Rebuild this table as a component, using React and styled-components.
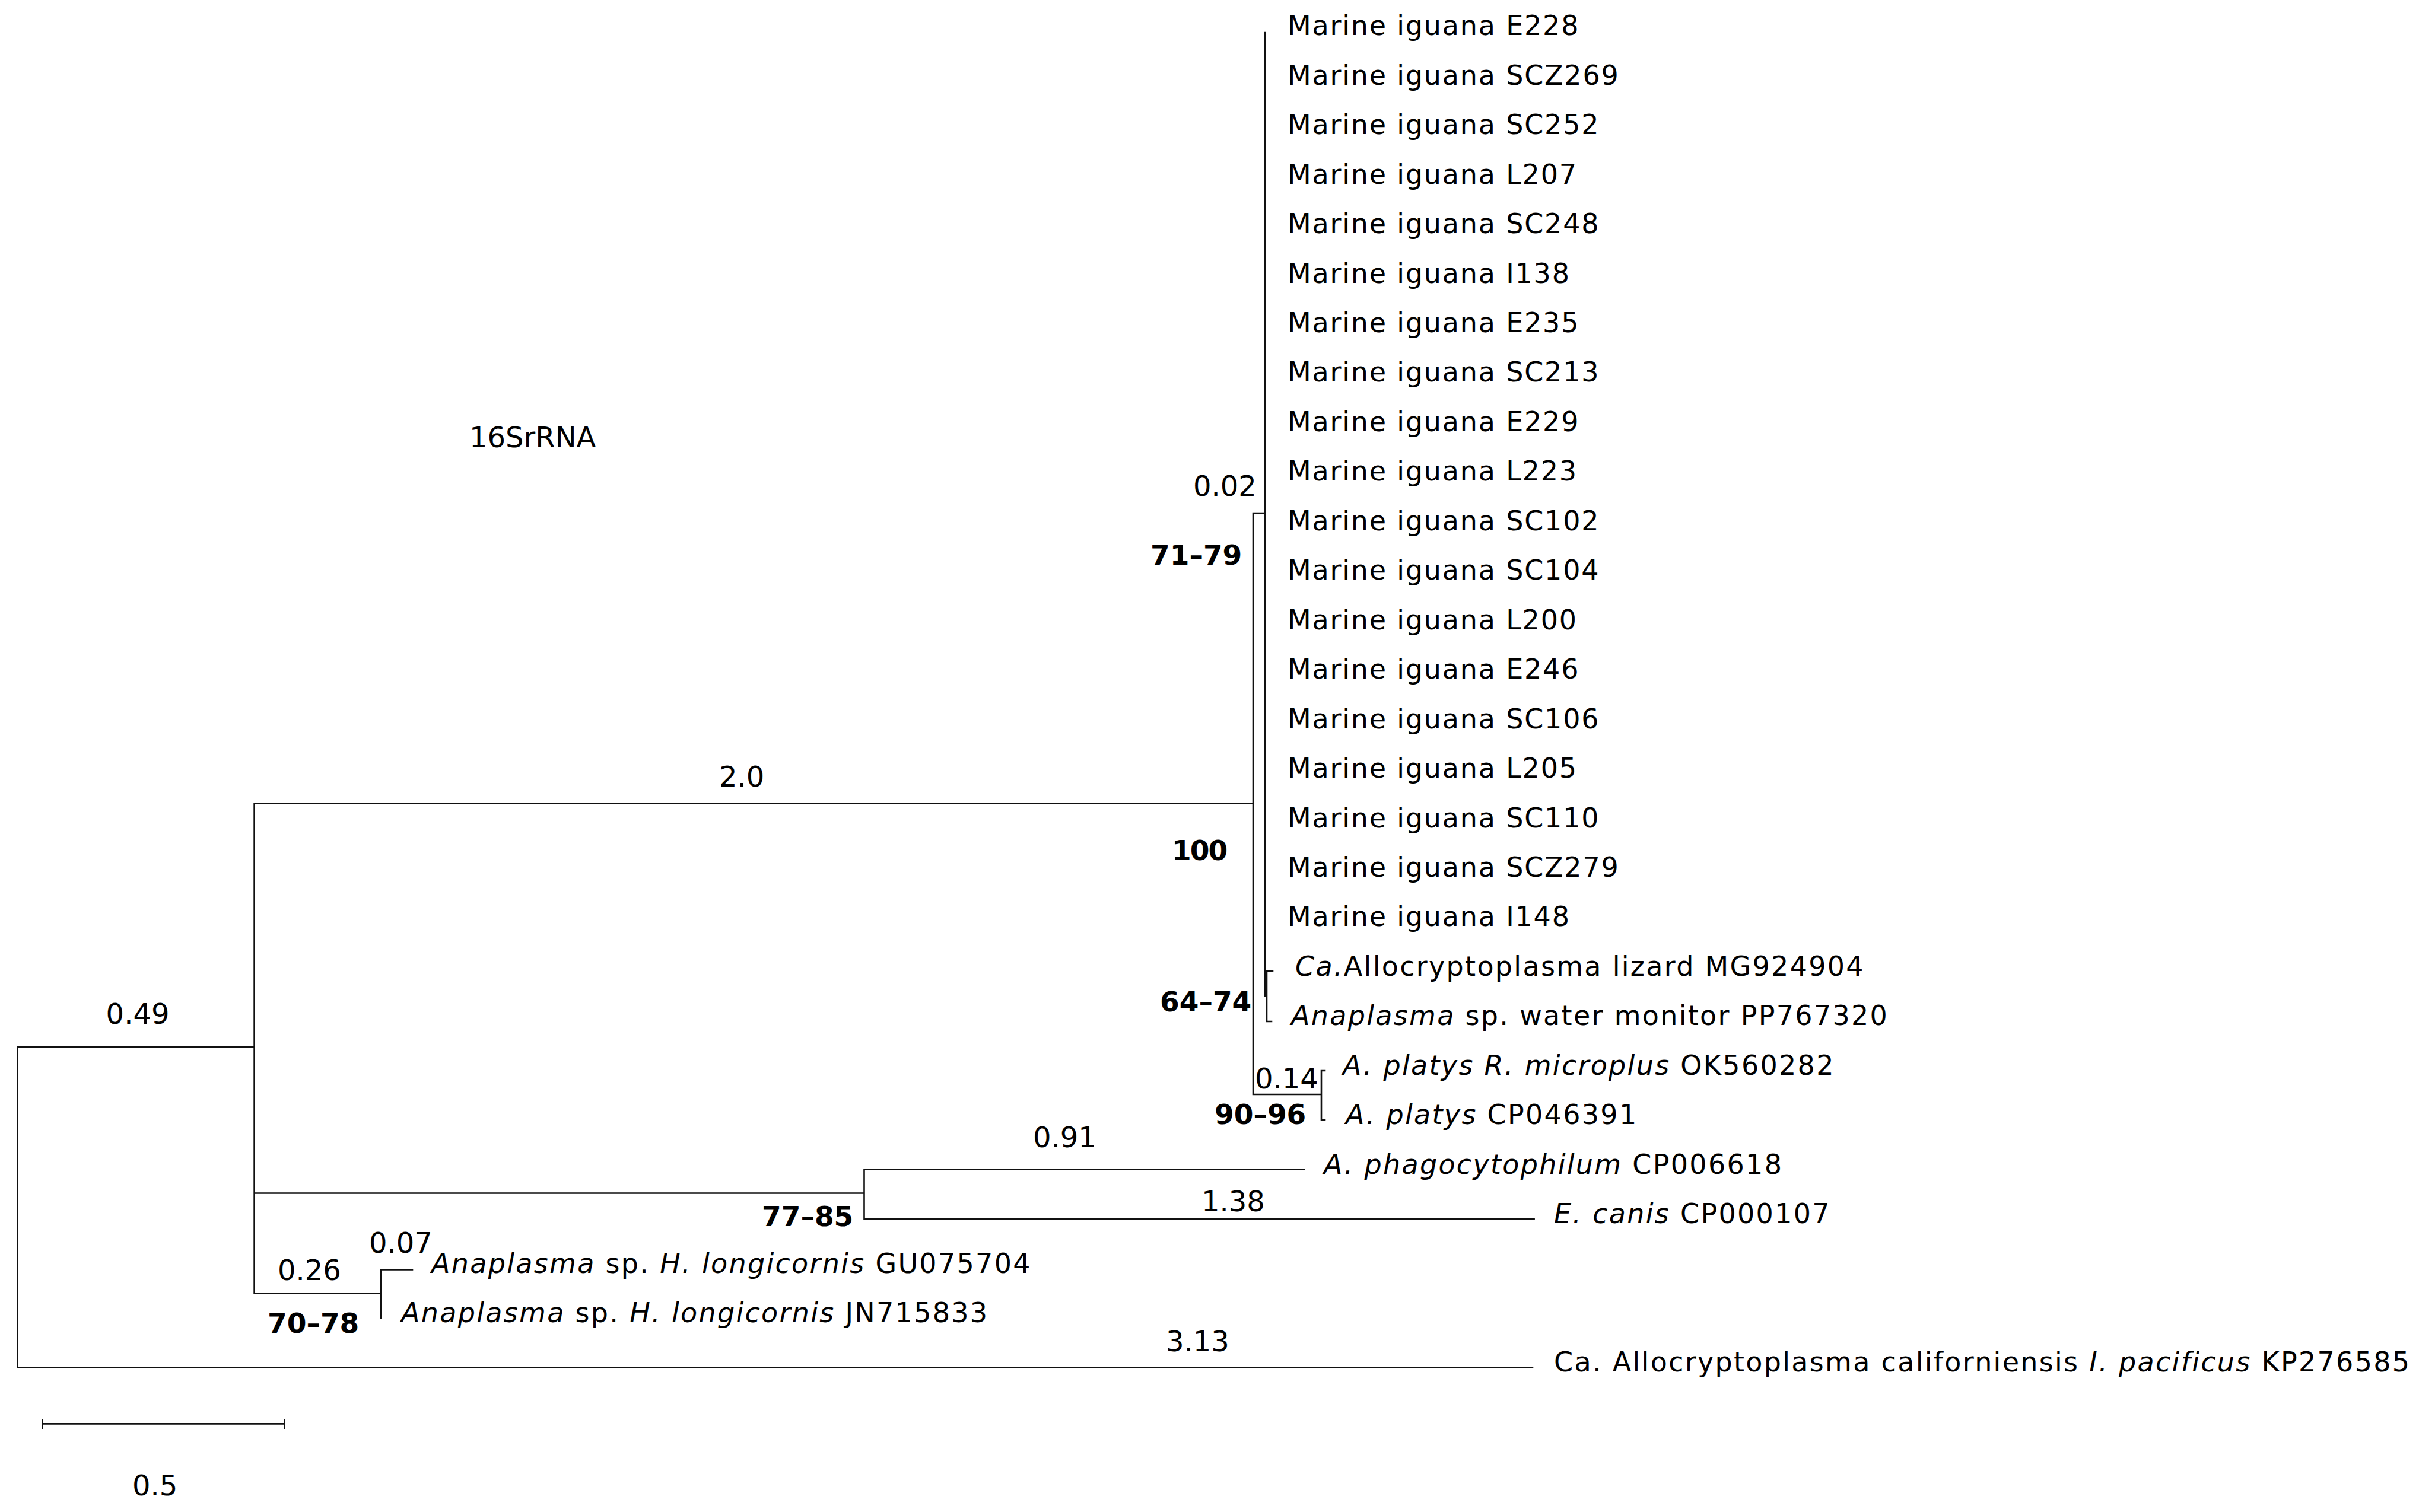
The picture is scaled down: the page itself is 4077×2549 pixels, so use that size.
import styled, { createGlobalStyle } from 'styled-components';

const GlobalStyle = createGlobalStyle`
  html, body {
    margin: 0;
    padding: 0;
    background: #fff;
    overflow: hidden;
  }
`;

const WIDTH = 4077;
const HEIGHT = 2549;

// leaf rows, baseline of the first label and step between rows
const ROW0 = 59.3;
const ROW = 83.45;
const rowY = (i) => ROW0 + ROW * i;

const iguanas = [
  'E228', 'SCZ269', 'SC252', 'L207', 'SC248', 'I138', 'E235', 'SC213', 'E229',
  'L223', 'SC102', 'SC104', 'L200', 'E246', 'SC106', 'L205', 'SC110', 'SCZ279', 'I148'
];

// other leaves: row, x of label, parts [text, italic]
const otherTaxa = [
  { row: 19, x: 2183, parts: [['Ca.', true], ['Allocryptoplasma lizard MG924904', false]] },
  { row: 20, x: 2176, parts: [['Anaplasma', true], [' sp. water monitor PP767320', false]] },
  { row: 21, x: 2263, parts: [['A. platys R. microplus', true], [' OK560282', false]] },
  { row: 22, x: 2268, parts: [['A. platys', true], [' CP046391', false]] },
  { row: 23, x: 2231, parts: [['A. phagocytophilum', true], [' CP006618', false]] },
  { row: 24, x: 2619, parts: [['E. canis', true], [' CP000107', false]] },
  { row: 25, x: 727, parts: [['Anaplasma', true], [' sp. ', false], ['H. longicornis', true], [' GU075704', false]] },
  { row: 26, x: 676, parts: [['Anaplasma', true], [' sp. ', false], ['H. longicornis', true], [' JN715833', false]] },
  { row: 27, x: 2619, parts: [['Ca. Allocryptoplasma californiensis ', false], ['I. pacificus', true], [' KP276585', false]] }
];

// tree drawn as polylines [x, y, x, y, ...]
const branches = [
  [428.6, 1764.7, 29.6, 1764.7, 29.6, 2305.8, 2583, 2305.8],
  [2112, 1354.6, 428.6, 1354.6, 428.6, 2180.7, 642, 2180.7],
  [428.6, 2011.5, 1456.5, 2011.5],
  [2198, 1971.7, 1456.5, 1971.7, 1456.5, 2055, 2585.6, 2055],
  [695, 2140.5, 642, 2140.5, 642, 2222.6],
  [2132, 865, 2112, 865, 2112, 1845, 2227, 1845],
  [2132, 55, 2132, 1679, 2135, 1679],
  [2145, 1637, 2135, 1637, 2135, 1722, 2143, 1722],
  [2233, 1805, 2227, 1805, 2227, 1888, 2233, 1888]
];

const lengths = [
  { x: 178.6, y: 1726, t: '0.49' },
  { x: 1212, y: 1326, t: '2.0' },
  { x: 2011, y: 836, t: '0.02' },
  { x: 2115, y: 1835, t: '0.14' },
  { x: 1741, y: 1934, t: '0.91' },
  { x: 2025, y: 2042, t: '1.38' },
  { x: 622, y: 2112, t: '0.07' },
  { x: 468, y: 2158, t: '0.26' },
  { x: 1965, y: 2278, t: '3.13' }
];

const supports = [
  { x: 1939, y: 952, t: '71–79' },
  { x: 1975, y: 1450, t: '100' },
  { x: 1955, y: 1705, t: '64–74' },
  { x: 2047, y: 1895, t: '90–96' },
  { x: 1284, y: 2067, t: '77–85' },
  { x: 451, y: 2247, t: '70–78' }
];

const toPath = (pts) =>
  pts.reduce((d, v, i) => d + (i % 2 === 0 ? (i === 0 ? 'M' : ' L') + v : ',' + v), '');

export default function App() {
  return (
    <>
      <GlobalStyle />
      <Figure>
        <TreeSvg width={WIDTH} height={HEIGHT} viewBox={`0 0 ${WIDTH} ${HEIGHT}`}>
          <Branch d={branches.map(toPath).join(' ')} />

          <ScaleBar d="M71.4,2400.4 L479.6,2400.4 M71.4,2392 L71.4,2409 M479.6,2392 L479.6,2409" />
          <LengthLabel x={223} y={2521}>0.5</LengthLabel>

          <LengthLabel x={791} y={754}>16SrRNA</LengthLabel>

          {iguanas.map((id, i) => (
            <TaxonLabel key={id} x={2170} y={rowY(i)}>
              Marine iguana {id}
            </TaxonLabel>
          ))}

          {otherTaxa.map((taxon) => (
            <TaxonLabel key={taxon.row} x={taxon.x} y={rowY(taxon.row)} $spacing={2.3}>
              {taxon.parts.map(([text, italic], k) =>
                italic ? <Em key={k}>{text}</Em> : <tspan key={k}>{text}</tspan>
              )}
            </TaxonLabel>
          ))}

          {lengths.map((l) => (
            <LengthLabel key={l.t} x={l.x} y={l.y}>{l.t}</LengthLabel>
          ))}

          {supports.map((s) => (
            <SupportLabel key={s.t} x={s.x} y={s.y} $narrow={s.t === '100'}>{s.t}</SupportLabel>
          ))}
        </TreeSvg>
      </Figure>
    </>
  );
}

const Figure = styled.div`
  width: ${WIDTH}px;
  height: ${HEIGHT}px;
  background: #fff;
`;

const TreeSvg = styled.svg`
  display: block;
`;

const Branch = styled.path`
  fill: none;
  stroke: #111;
  stroke-width: 2.6;
  stroke-linejoin: miter;
  stroke-linecap: square;
`;

const ScaleBar = styled(Branch)`
  stroke-width: 2.8;
  stroke-linecap: butt;
`;

const TaxonLabel = styled.text`
  font-family: 'DejaVu Sans', 'Liberation Sans', sans-serif;
  font-size: 46px;
  letter-spacing: ${({ $spacing }) => $spacing ?? 1.8}px;
  fill: #000;
  white-space: pre;
`;

const Em = styled.tspan`
  font-style: italic;
`;

const LengthLabel = styled.text`
  font-family: 'DejaVu Sans', 'Liberation Sans', sans-serif;
  font-size: 48px;
  fill: #000;
`;

const SupportLabel = styled.text`
  font-family: 'DejaVu Sans', 'Liberation Sans', sans-serif;
  font-size: 47px;
  font-weight: 700;
  letter-spacing: ${({ $narrow }) => ($narrow ? -2 : 0)}px;
  fill: #000;
`;
